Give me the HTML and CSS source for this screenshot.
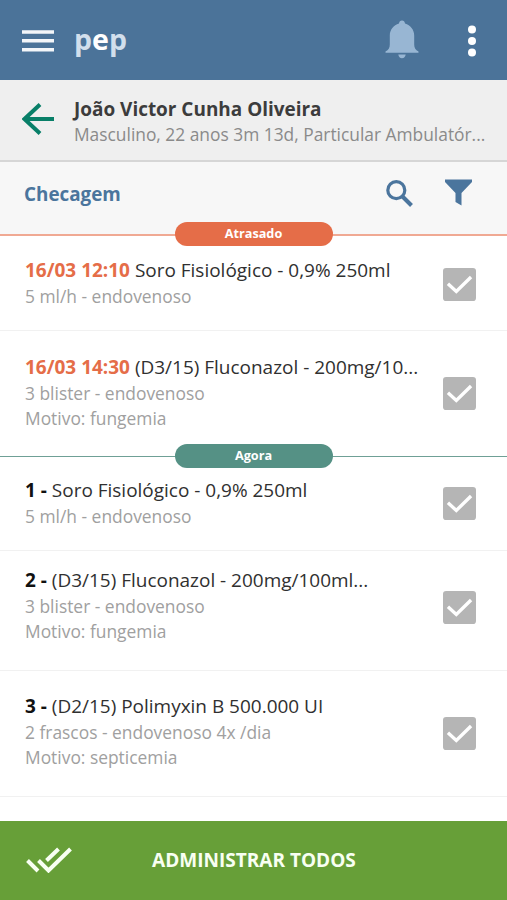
FILE: index.html
```html
<!DOCTYPE html>
<html lang="pt-BR">
<head>
<meta charset="utf-8">
<title>pep - Checagem</title>
<link rel="stylesheet" href="styles.css">
</head>
<body>
<svg class="defs" width="0" height="0" aria-hidden="true">
  <symbol id="check" viewBox="0 0 32 32">
    <rect width="32" height="32" rx="3" fill="#b5b5b5"/>
    <path d="M4.800 15.300L12.900 22.700L27.200 8.700" fill="none" stroke="#fff" stroke-width="3.300"/>
  </symbol>
</svg>
<div class="app">
  <header class="topbar">
    <svg class="menu" viewBox="0 0 32 22"><path d="M0 2H32M0 10.8H32M0 19.7H32" stroke="#f3f6f9" stroke-width="3.400"/></svg>
    <div class="logo">p<span class="logo-e">e</span>p</div>
    <svg class="bell" viewBox="0 0 34 40"><path fill="#98b6d3" d="M17 .5c1.700 0 2.800 1.300 3 3.100 5.400 1.700 9.200 6.200 9.200 11.900v9c0 3.600 1.300 5.200 4.300 7v1.200H.5v-1.200c3-1.800 4.300-3.400 4.300-7v-9c0-5.700 3.800-10.200 9.200-11.900C14.200 1.800 15.300.5 17 .5zM13.300 34.500h7.400c-.3 2.400-1.700 3.700-3.700 3.700s-3.400-1.300-3.700-3.700z"/></svg>
    <svg class="more" viewBox="0 0 8 32"><g fill="#fff"><circle cx="4" cy="4.500" r="4"/><circle cx="4" cy="16" r="4"/><circle cx="4" cy="27.500" r="4"/></g></svg>
  </header>
  <section class="patient">
    <svg class="back" viewBox="0 0 32 32"><path d="M32 16H2M18 1.500L2.500 16L18 30.500" fill="none" stroke="#087f68" stroke-width="4"/></svg>
    <div class="patient-info">
      <div class="patient-name">João Victor Cunha Oliveira</div>
      <div class="patient-meta">Masculino, 22 anos 3m 13d, Particular Ambulatór...</div>
    </div>
  </section>
  <section class="toolbar">
    <h1 class="heading">Checagem</h1>
    <svg class="search" viewBox="0 0 27 27"><circle cx="10.300" cy="10.200" r="8.500" fill="none" stroke="#4b759d" stroke-width="3.200"/><path d="M16.500 16.500L25.500 25.500" stroke="#4b759d" stroke-width="4"/></svg>
    <svg class="filter" viewBox="0 0 27 27"><path fill="#4b759d" d="M0 .5H27V3L16.500 14V26.500L10.500 23V14L0 3z"/></svg>
  </section>
  <div class="divider late"><span class="pill">Atrasado</span></div>
  <article class="item r1">
    <div class="text"><div class="title"><b>16/03 12:10</b> Soro Fisiológico - 0,9% 250ml</div>
    <div class="sub">5 ml/h - endovenoso</div></div>
    <svg class="box"><use href="#check"/></svg>
  </article>
  <article class="item r2">
    <div class="text"><div class="title"><b>16/03 14:30</b> (D3/15) Fluconazol - 200mg/10...</div>
    <div class="sub">3 blister - endovenoso</div><div class="sub">Motivo: fungemia</div></div>
    <svg class="box"><use href="#check"/></svg>
  </article>
  <div class="divider now"><span class="pill">Agora</span></div>
  <article class="item r3">
    <div class="text"><div class="title"><b>1 -</b> Soro Fisiológico - 0,9% 250ml</div>
    <div class="sub">5 ml/h - endovenoso</div></div>
    <svg class="box"><use href="#check"/></svg>
  </article>
  <article class="item r4">
    <div class="text"><div class="title"><b>2 -</b> (D3/15) Fluconazol - 200mg/100ml...</div>
    <div class="sub">3 blister - endovenoso</div><div class="sub">Motivo: fungemia</div></div>
    <svg class="box"><use href="#check"/></svg>
  </article>
  <article class="item r5">
    <div class="text"><div class="title"><b>3 -</b> (D2/15) Polimyxin B 500.000 UI</div>
    <div class="sub">2 frascos - endovenoso 4x /dia</div><div class="sub">Motivo: septicemia</div></div>
    <svg class="box"><use href="#check"/></svg>
  </article>
  <footer class="action">
    <svg class="double" viewBox="0 0 46 26"><path d="M1.500 13.500L12 24M32.500 2L20.500 13.500M12.500 13.500L22.500 23.500L44.500 2" fill="none" stroke="#f8fff2" stroke-width="4"/></svg>
    <span class="action-label">ADMINISTRAR TODOS</span>
  </footer>
</div>
</body>
</html>
```
FILE: styles.css
```css
* { box-sizing: border-box; }
body { margin: 0; background: #fff; font-family: "Open Sans", "Noto Sans", sans-serif; }
svg { display: block; flex: none; }
.defs { position: absolute; }
.app { width: 507px; height: 900px; display: flex; flex-direction: column; overflow: hidden; }
.app > * { flex: none; }

.topbar { height: 80px; background: #4b7399; display: flex; align-items: center; padding-left: 22px; }
.menu { width: 32px; height: 22px; margin-top: 1px; }
.logo { width: 311px; margin-left: 20px; padding-bottom: 3px; font-size: 28.500px; font-weight: 700; line-height: 40px; color: #d2dfec; }
.logo-e { color: #fff; }
.bell { width: 34px; height: 40px; }
.more { width: 8px; height: 32px; margin-left: 49px; margin-top: 1px; }

.patient { height: 82px; background: #efefef; border-bottom: 2px solid #d6d6d6; display: flex; padding-left: 22px; }
.back { width: 32px; height: 32px; margin-top: 23px; }
.patient-info { margin-left: 20px; padding-top: 16px; white-space: nowrap; }
.patient-name { font-size: 18.950px; line-height: 26px; font-weight: 700; color: #3c3c3c; }
.patient-meta { font-size: 17.380px; line-height: 24px; color: #8a8a8a; }

.toolbar { height: 72px; background: #f7f7f7; display: flex; align-items: flex-start; padding: 18px 0 0 24px; }
.heading { margin: 0; width: 362px; font-size: 18.850px; line-height: 28px; font-weight: 700; color: #4b759d; }
.search { width: 27px; height: 27px; }
.filter { width: 27px; height: 27px; margin-left: 32px; margin-top: -1px; }

.divider { height: 2px; display: flex; align-items: center; justify-content: center; position: relative; }
.late { background: #f0a993; }
.now { height: 1px; background: #6fa096; }
.pill { flex: none; width: 158px; height: 24px; margin-bottom: 2px; border-radius: 12px; color: #fff; font-size: 12.700px; font-weight: 700; line-height: 22px; text-align: center; }
.late .pill { background: #e56d48; }
.now .pill { background: #559185; }

.item { display: flex; align-items: flex-start; padding-left: 25px; border-bottom: 1px solid #f1f1f1; }
.text { width: 418px; white-space: nowrap; }
.title { margin-bottom: 1px; font-size: 18.980px; line-height: 26px; color: #303030; }
.title b { color: #111; }
.r1 .title b, .r2 .title b { color: #e56d48; }
.sub { font-size: 17.400px; line-height: 25px; color: #a0a0a0; }
.box { width: 33px; height: 33px; }
.r1 { height: 95px; padding-top: 21px; }
.r1 .box { margin-top: 11px; }
.r2 { height: 125px; padding-top: 23px; border: 0; }
.r2 .box { margin-top: 23px; }
.r3 { height: 94px; padding-top: 20px; }
.r3 .box { margin-top: 10px; }
.r4 { height: 120px; padding-top: 16px; }
.r4 .box { margin-top: 24px; }
.r5 { height: 126px; padding-top: 22px; }
.r5 .box { margin-top: 24px; }

.action { height: 79px; margin-top: auto; background: #679f38; display: flex; align-items: center; padding: 0 0 1px 26px; }
.double { width: 46px; height: 26px; }
.action-label { margin-left: 80px; font-size: 19.050px; font-weight: 700; color: #f8fff2; white-space: nowrap; }
```
